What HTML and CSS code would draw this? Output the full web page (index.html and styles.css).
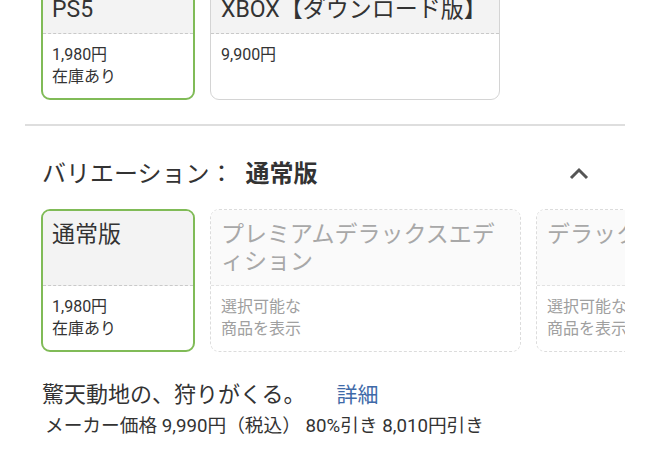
FILE: index.html
```html
<!DOCTYPE html>
<html lang="ja">
<head>
<meta charset="utf-8">
<link rel="stylesheet" href="styles.css">
</head>
<body>
<div class="page">
  <div class="row row-top">
    <div class="card selected w-ps5">
      <div class="card-head">PS5</div>
      <div class="card-body">1,980円<br>在庫あり</div>
    </div>
    <div class="card normal w-xbox">
      <div class="card-head">XBOX【ダウンロード版】</div>
      <div class="card-body">9,900円</div>
    </div>
  </div>

  <hr class="divider">

  <div class="var-head">
    <div class="var-title">バリエーション：<b class="var-current">通常版</b></div>
    <svg class="chev" width="22" height="14" viewBox="0 0 22 14"><polyline points="3,11 11,3 19,11" fill="none" stroke="#555" stroke-width="3"/></svg>
  </div>

  <div class="row row-var">
    <div class="card selected w-ps5">
      <div class="card-head">通常版</div>
      <div class="card-body">1,980円<br>在庫あり</div>
    </div>
    <div class="card disabled w-premium">
      <div class="card-head">プレミアムデラックスエディション</div>
      <div class="card-body">選択可能な<br>商品を表示</div>
    </div>
    <div class="card disabled w-deluxe">
      <div class="card-head">デラックスエディション</div>
      <div class="card-body">選択可能な<br>商品を表示</div>
    </div>
  </div>

  <div class="catch">驚天動地の、狩りがくる。<a class="more">詳細</a></div>
  <div class="price">メーカー価格 9,990円（税込） 80%引き 8,010円引き</div>
</div>
</body>
</html>
```
FILE: styles.css
```css
html, body {
  margin: 0;
  padding: 0;
  background: #fff;
}
body {
  width: 650px;
  height: 450px;
  overflow: hidden;
  font-family: Roboto, "Noto Sans CJK JP", sans-serif;
  color: #333;
}
.page {
  margin: 0 25px;
}
.row {
  display: flex;
  gap: 15px;
  padding-left: 16px;
  overflow: hidden;
  align-items: stretch;
}
.row-top {
  margin-top: -16px;
}
.card {
  flex: none;
  box-sizing: border-box;
  border-radius: 9px;
  display: flex;
  flex-direction: column;
  overflow: hidden;
}
.w-ps5 { width: 154px; }
.w-xbox { width: 290px; }
.w-premium { width: 311px; }
.w-deluxe { width: 290px; }

.card-head {
  font-size: 23px;
  line-height: 27px;
  padding: 10px 9px 10px;
  background: #f3f3f3;
  border-bottom: 1px dashed #c9c9c9;
  flex: 1 1 auto;
  line-break: anywhere;
}
.card-body {
  font-size: 16px;
  line-height: 22px;
  padding: 10px 9px 10px;
  flex: none;
  min-height: 44px;
}
.card.selected {
  border: 2px solid #80bb57;
}
.card.normal {
  border: 1px solid #d4d4d4;
}
.card.normal .card-head,
.card.normal .card-body {
  padding-left: 10px;
  padding-right: 10px;
}
.card.normal .card-head { padding-top: 11px; }
.card.normal .card-body { padding-bottom: 11px; }

.card.disabled {
  border: 1px dashed #dcdcdc;
  color: #a8a8a8;
}
.card.disabled .card-head {
  background: #fafafa;
  border-bottom-color: #e2e2e2;
  padding: 11px 10px 10px;
}
.card.disabled .card-body {
  padding: 10px 10px 11px;
  color: #a0a0a0;
}

.divider {
  border: none;
  border-top: 2px solid #dedede;
  margin: 24px 0 0;
}
.var-head {
  display: flex;
  align-items: center;
  justify-content: space-between;
  padding: 0 35px 0 17px;
  margin-top: 32px;
  height: 32px;
}
.var-title {
  font-size: 24px;
  line-height: 32px;
  color: #333;
}
.var-current {
  font-weight: bold;
  margin-left: 12px;
}
.chev { display: block; }

.row-var {
  margin-top: 19px;
}

.catch {
  margin-top: 28px;
  padding-left: 17px;
  font-size: 22px;
  line-height: 30px;
  color: #333;
}
.more {
  color: #3f6aa8;
  font-size: 21px;
  margin-left: 31px;
}
.price {
  margin-top: 3px;
  padding-left: 20px;
  font-size: 18.7px;
  line-height: 26px;
  color: #333;
}
```
